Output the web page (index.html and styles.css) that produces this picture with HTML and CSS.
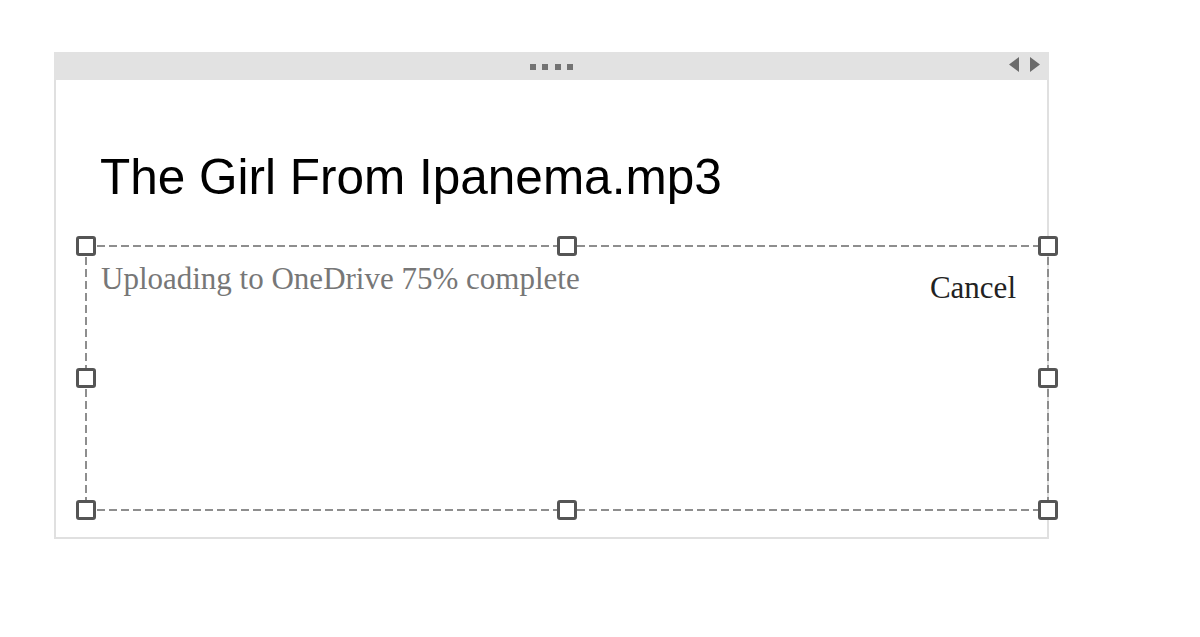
FILE: index.html
```html
<!DOCTYPE html>
<html>
<head>
<meta charset="utf-8">
<link rel="stylesheet" href="styles.css">
</head>
<body>
<div class="frame">
  <div class="topbar">
    <div class="grip"><span></span><span></span><span></span><span></span></div>
    <div class="arrows">
      <svg width="32" height="15" viewBox="0 0 32 15"><polygon points="0,7.5 10,0 10,15" fill="#6b6b6b"/><polygon points="21,0 31,7.5 21,15" fill="#6b6b6b"/></svg>
    </div>
  </div>
  <div class="content">
    <h1 class="title">The Girl From Ipanema.mp3</h1>
    <div class="selection">
      <div class="status">Uploading to OneDrive 75% complete</div>
      <div class="cancel">Cancel</div>
      <span class="handle h-tl"></span>
      <span class="handle h-tm"></span>
      <span class="handle h-tr"></span>
      <span class="handle h-ml"></span>
      <span class="handle h-mr"></span>
      <span class="handle h-bl"></span>
      <span class="handle h-bm"></span>
      <span class="handle h-br"></span>
    </div>
  </div>
</div>
</body>
</html>
```
FILE: styles.css
```css
html, body {
  margin: 0;
  padding: 0;
  background: #ffffff;
}
body {
  padding: 52px 0 0 54px;
}
.frame {
  width: 991px;
  height: 485px;
  border: 2px solid #e0e0e0;
  border-top: 0;
  display: flex;
  flex-direction: column;
}
.topbar {
  height: 28px;
  margin: 0 -2px;
  background: #e2e2e2;
  display: flex;
  align-items: center;
  justify-content: center;
  position: relative;
}
.grip {
  display: flex;
  gap: 6.5px;
  margin-top: 2px;
}
.grip span {
  width: 6px;
  height: 6px;
  background: #737373;
}
.arrows {
  position: absolute;
  right: 8px;
  top: 5px;
  display: flex;
}
.content {
  flex: 1;
  display: flex;
  flex-direction: column;
}
.title {
  margin: 69px 0 40px 44px;
  font-family: "Liberation Sans", Arial, sans-serif;
  font-weight: normal;
  font-size: 49.5px;
  line-height: 56px;
  color: #000;
}
.selection {
  position: relative;
  box-sizing: border-box;
  margin-left: 29px;
  margin-right: -2px;
  height: 266px;
  background:
    repeating-linear-gradient(to right, #8e8e8e 0 8px, transparent 8px 12px) left top / 100% 2px no-repeat,
    repeating-linear-gradient(to right, #8e8e8e 0 8px, transparent 8px 12px) left bottom / 100% 2px no-repeat,
    repeating-linear-gradient(to bottom, #8e8e8e 0 8px, transparent 8px 12px) left top / 2px 100% no-repeat,
    repeating-linear-gradient(to bottom, #8e8e8e 0 8px, transparent 8px 12px) right top / 2px 100% no-repeat;
  display: flex;
  justify-content: space-between;
  align-items: flex-start;
  padding: 16px 33px 0 16px;
  font-family: "Liberation Serif", "Times New Roman", serif;
  font-size: 31px;
  line-height: 35px;
}
.status {
  color: #777777;
}
.cancel {
  color: #222222;
  margin-top: 9px;
}
.handle {
  position: absolute;
  width: 14px;
  height: 14px;
  border: 3px solid #555555;
  border-radius: 3px;
  background: #ffffff;
  transform: translate(-50%, -50%);
}
.h-tl { left: 1px; top: 1px; }
.h-tm { left: 50%; top: 1px; }
.h-tr { left: calc(100% - 1px); top: 1px; }
.h-ml { left: 1px; top: 50%; }
.h-mr { left: calc(100% - 1px); top: 50%; }
.h-bl { left: 1px; top: calc(100% - 1px); }
.h-bm { left: 50%; top: calc(100% - 1px); }
.h-br { left: calc(100% - 1px); top: calc(100% - 1px); }
```
